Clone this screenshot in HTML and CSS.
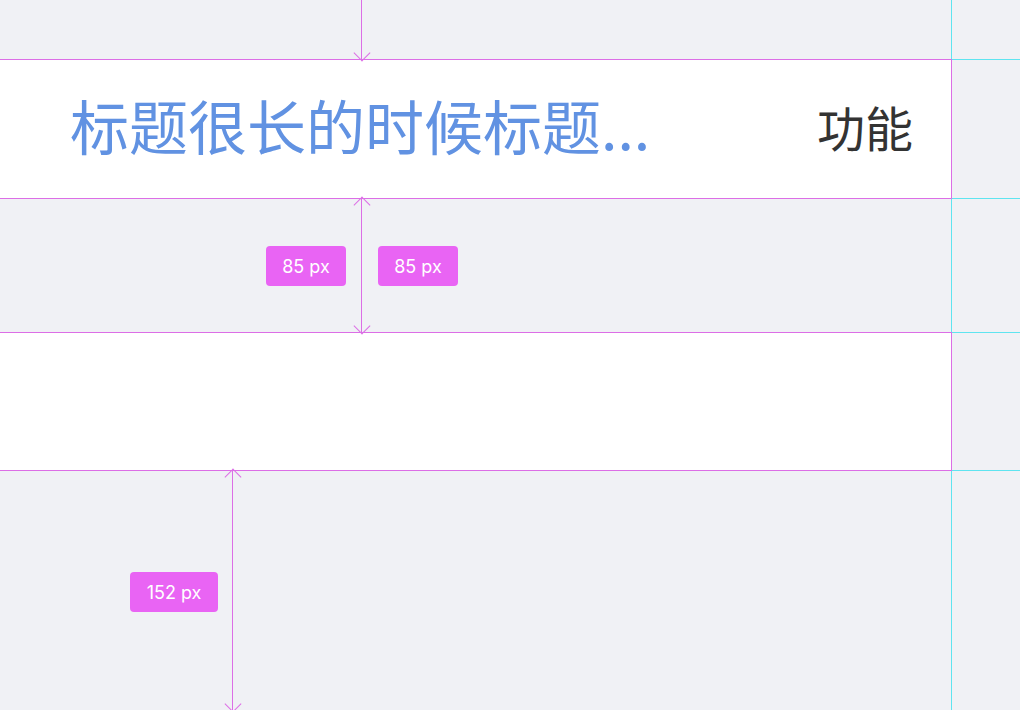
FILE: index.html
```html
<!DOCTYPE html>
<html lang="zh-CN">
<head>
  <meta charset="UTF-8" />
  <title>导航栏标注</title>
  <link rel="stylesheet" href="styles.css">
</head>
<body>
  <div class="canvas">
    <!-- guides -->
    <div class="guide-v"></div>
    <div class="guide-h" style="top: 59px"></div>
    <div class="guide-h" style="top: 198px"></div>
    <div class="guide-h" style="top: 332px"></div>
    <div class="guide-h" style="top: 470px"></div>

    <div class="column">
      <div class="spacer-top"></div>

      <div class="navbar">
        <span class="nav-title">标题很长的时候标题...</span>
        <span class="nav-action">功能</span>
      </div>

      <div class="spacer-mid"></div>

      <div class="navbar empty"></div>
    </div>

    <!-- measurements -->
    <div class="measure down" style="left: 361px; top: 0; height: 60px"></div>
    <div class="measure both" style="left: 361px; top: 198px; height: 135px"></div>
    <div class="measure both" style="left: 232px; top: 470px; height: 241px"></div>

    <span class="tag" style="left: 266px; top: 246px">85 px</span>
    <span class="tag" style="left: 378px; top: 246px">85 px</span>
    <span class="tag wide" style="left: 130px; top: 572px">152 px</span>
  </div>
</body>
</html>
```

FILE: styles.css
```css
:root {
  --bg-color: #f0f1f5;
  --bar-bg: #ffffff;
  --mark-line: #dc6ee6;
  --tag-bg: #e964f4;
  --guide: #5fe4f0;
  --title-color: #6192e2;
  --action-color: #333333;
}

* {
  margin: 0;
  padding: 0;
  box-sizing: border-box;
}

body {
  background: var(--bg-color);
  font-family: "Noto Sans CJK SC", "Noto Sans", sans-serif;
  width: 1020px;
  height: 710px;
  overflow: hidden;
}

.canvas {
  position: relative;
  width: 1020px;
  height: 710px;
}

.column {
  position: relative;
  z-index: 1;
  width: 953px;
  margin-left: -1px;
  display: flex;
  flex-direction: column;
}

.spacer-top {
  height: 59px;
}

.spacer-mid {
  height: 133px;
}

.navbar {
  height: 140px;
  background: var(--bar-bg);
  border: 1px solid var(--mark-line);
  display: flex;
  align-items: center;
  justify-content: space-between;
  padding: 0 38px 9px 70px;
}

.navbar.empty {
  height: 139px;
}

.nav-title {
  font-size: 59px;
  line-height: 1;
  color: var(--title-color);
  white-space: nowrap;
}

.nav-action {
  font-size: 48px;
  line-height: 1;
  color: var(--action-color);
  padding-top: 3px;
}

.guide-v {
  position: absolute;
  left: 951px;
  top: 0;
  width: 1px;
  height: 710px;
  background: var(--guide);
}

.guide-h {
  position: absolute;
  left: 952px;
  width: 68px;
  height: 1px;
  background: var(--guide);
}

.measure {
  position: absolute;
  z-index: 2;
  width: 1px;
  background: var(--mark-line);
}

.measure::before,
.measure::after {
  content: "";
  position: absolute;
  left: -5px;
  width: 11px;
  height: 11px;
  border-color: var(--mark-line);
  border-style: solid;
  transform: rotate(45deg);
}

.measure.down::after,
.measure.both::after {
  bottom: 1px;
  border-width: 0 1px 1px 0;
}

.measure.both::before {
  top: 1px;
  border-width: 1px 0 0 1px;
}

.measure.down::before {
  display: none;
}

.tag {
  position: absolute;
  z-index: 2;
  width: 80px;
  height: 40px;
  border-radius: 4px;
  background: var(--tag-bg);
  color: #ffffff;
  font-family: Inter, "Noto Sans", sans-serif;
  font-size: 18px;
  display: flex;
  align-items: center;
  justify-content: center;
}

.tag.wide {
  width: 88px;
}
```
